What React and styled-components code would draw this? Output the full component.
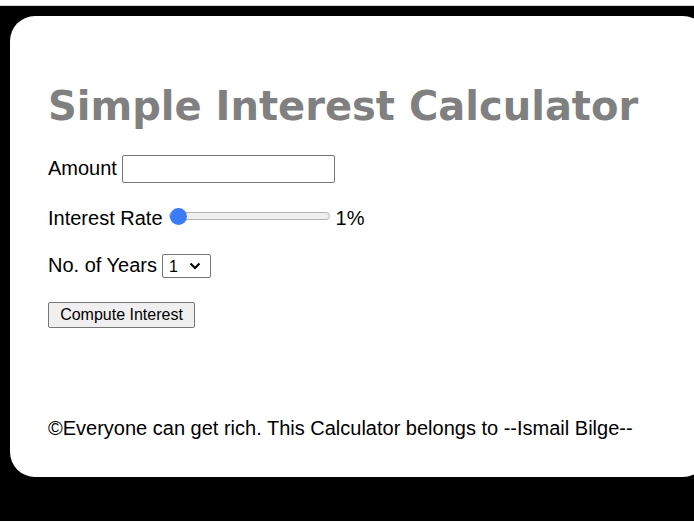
import React, { useState } from "react";
import styled, { createGlobalStyle } from "styled-components";

const GlobalStyle = createGlobalStyle`
  html, body { margin: 0; padding: 0; background: #ffffff; }
  body { font-family: "Liberation Sans", Arial, sans-serif; overflow: hidden; }
`;

const Backdrop = styled.div`
  margin-top: 5px;
  border-top: 1px solid #d4d4d4;
  background: #000000;
  padding: 10px 0 0 10px;
  height: 516px;
  box-sizing: border-box;
  overflow: hidden;
`;

const Card = styled.main`
  width: 698px;
  height: 461px;
  box-sizing: border-box;
  background: #ffffff;
  border-radius: 25px;
  padding: 0 38px;
  display: flex;
  flex-direction: column;
`;

const Title = styled.h1`
  margin: 67px 0 0;
  font-family: "DejaVu Sans", Verdana, sans-serif;
  font-weight: bold;
  font-size: 40px;
  line-height: 47px;
  color: #808080;
  white-space: nowrap;
`;

const Row = styled.div`
  display: flex;
  align-items: center;
  height: ${(p) => p.$h || 28}px;
  margin-top: ${(p) => p.$top}px;
  gap: ${(p) => p.$gap ?? 5}px;
`;

const Label = styled.span`
  font-size: 20px;
  line-height: 23px;
  color: #000000;
  white-space: nowrap;
  position: relative;
  top: ${(p) => p.$shift ?? -1}px;
`;

const TextInput = styled.input`
  width: 213px;
  height: 28px;
  box-sizing: border-box;
  border: 1px solid #767676;
  border-radius: 2px;
  padding: 1px 2px;
  font-size: 16px;
  margin: 0;
`;

const Range = styled.input`
  -webkit-appearance: none;
  appearance: none;
  width: 161px;
  height: 17px;
  margin: 0 1px 0 1px;
  background: transparent;
  position: relative;
  top: -1px;

  &::-webkit-slider-runnable-track {
    height: 8px;
    background: #efefef;
    border: 1px solid #b2b2b2;
    border-radius: 5px;
    box-sizing: border-box;
  }
  &::-webkit-slider-thumb {
    -webkit-appearance: none;
    width: 17px;
    height: 17px;
    border-radius: 50%;
    background: #3b7cf6;
    border: none;
    margin-top: -5.5px;
  }
`;

const chevron =
  "url(\"data:image/svg+xml;utf8,<svg xmlns='http://www.w3.org/2000/svg' width='12' height='8' viewBox='0 0 12 8'><path d='M1.5 1.5 L6 6 L10.5 1.5' fill='none' stroke='black' stroke-width='2'/></svg>\")";

const Select = styled.select`
  -webkit-appearance: none;
  appearance: none;
  width: 49px;
  height: 24px;
  box-sizing: border-box;
  font-size: 16px;
  font-family: "Liberation Sans", Arial, sans-serif;
  border: 1px solid #767676;
  border-radius: 2px;
  margin: 0;
  padding: 0 0 0 6px;
  background-color: #ffffff;
  background-image: ${chevron};
  background-repeat: no-repeat;
  background-position: right 9px center;
  background-size: 12px 8px;
  color: #000000;
`;

const Button = styled.button`
  width: 147px;
  height: 26px;
  font-family: "Liberation Sans", Arial, sans-serif;
  font-size: 16px;
  color: #000000;
  background: #efefef;
  border: 1px solid #767676;
  border-radius: 2px;
  padding: 0 6px;
  margin: 0;
`;

const Footer = styled.p`
  margin: 89px 0 0;
  font-size: 20px;
  line-height: 23px;
  color: #000000;
  white-space: nowrap;
`;

export default function App() {
  const [rate, setRate] = useState(1);
  const [years, setYears] = useState("1");
  return (
    <>
      <GlobalStyle />
      <Backdrop>
        <Card>
          <Title>Simple Interest Calculator</Title>
          <Row $top={25}>
            <Label>Amount</Label>
            <TextInput type="number" />
          </Row>
          <Row $top={20} $gap={5}>
            <Label $shift={1}>Interest Rate</Label>
            <Range
              type="range"
              min="1"
              max="20"
              value={rate}
              onChange={(e) => setRate(e.target.value)}
            />
            <Label $shift={1}>{rate}%</Label>
          </Row>
          <Row $top={21} $gap={5}>
            <Label>No. of Years</Label>
            <Select value={years} onChange={(e) => setYears(e.target.value)}>
              {Array.from({ length: 10 }, (_, i) => (
                <option key={i} value={String(i + 1)}>
                  {i + 1}
                </option>
              ))}
            </Select>
          </Row>
          <Row $top={22} $h={26}>
            <Button>Compute Interest</Button>
          </Row>
          <Footer>
            ©Everyone can get rich. This Calculator belongs to --Ismail Bilge--
          </Footer>
        </Card>
      </Backdrop>
    </>
  );
}
